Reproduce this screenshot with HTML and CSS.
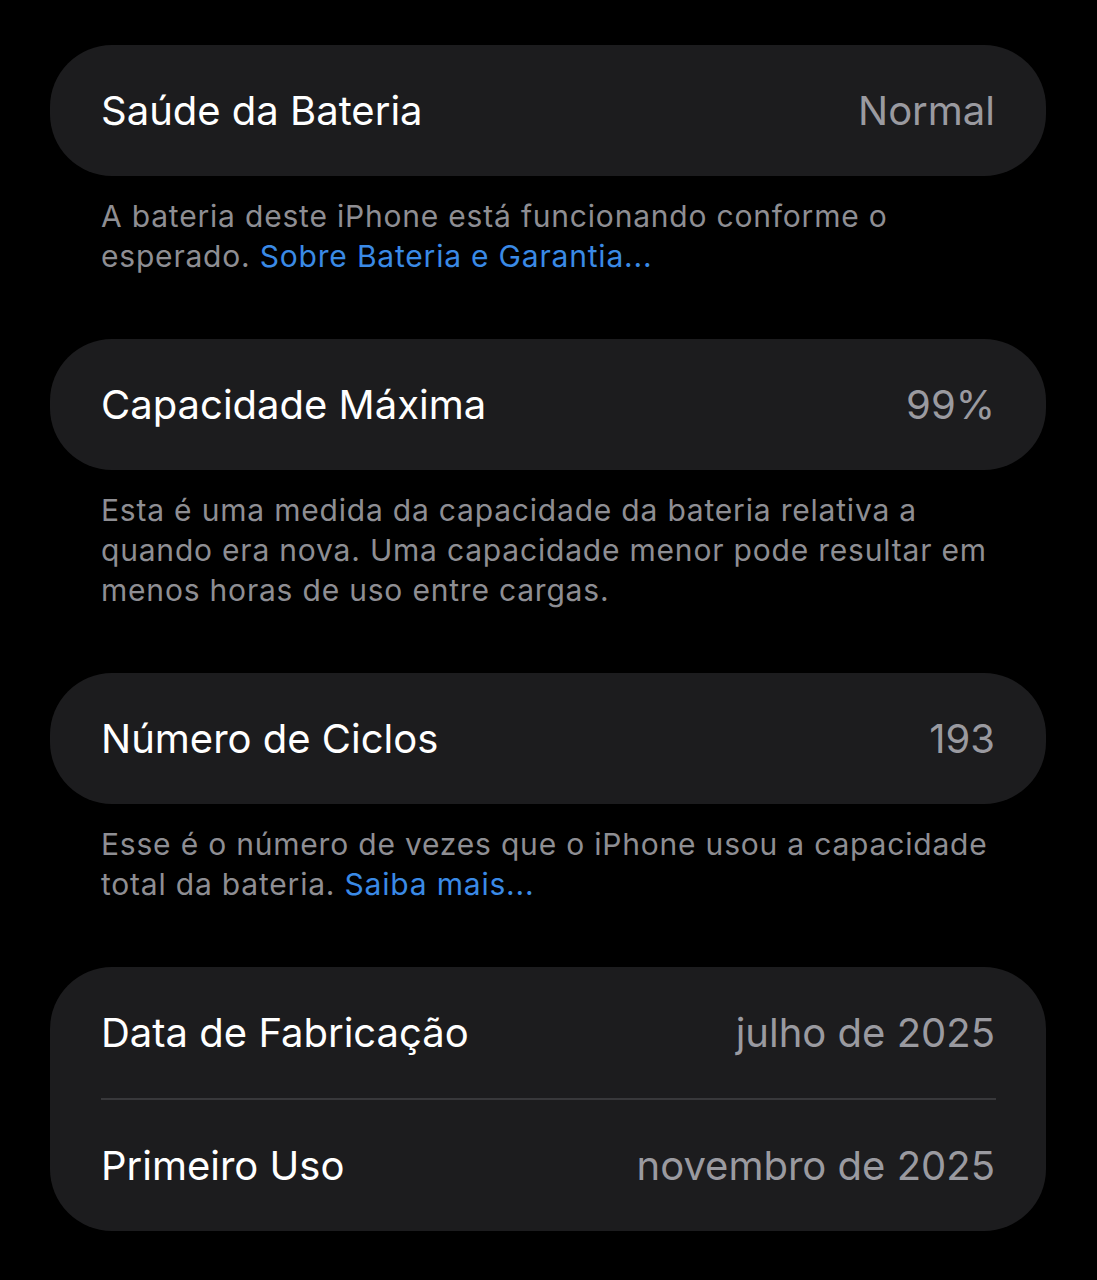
FILE: index.html
```html
<!DOCTYPE html>
<html lang="pt-BR">
<head>
<meta charset="utf-8">
<link rel="stylesheet" href="styles.css">
</head>
<body>
<main class="page">
  <section class="group">
    <div class="card">
      <div class="row"><span class="label">Saúde da Bateria</span><span class="value">Normal</span></div>
    </div>
    <p class="footer">A bateria deste iPhone está funcionando conforme o esperado. <span class="link">Sobre Bateria e Garantia...</span></p>
  </section>
  <section class="group">
    <div class="card">
      <div class="row"><span class="label">Capacidade Máxima</span><span class="value">99%</span></div>
    </div>
    <p class="footer">Esta é uma medida da capacidade da bateria relativa a quando era nova. Uma capacidade menor pode resultar em menos horas de uso entre cargas.</p>
  </section>
  <section class="group">
    <div class="card">
      <div class="row"><span class="label">Número de Ciclos</span><span class="value">193</span></div>
    </div>
    <p class="footer">Esse é o número de vezes que o iPhone usou a capacidade total da bateria. <span class="link">Saiba mais...</span></p>
  </section>
  <section class="group">
    <div class="card">
      <div class="row"><span class="label">Data de Fabricação</span><span class="value">julho de 2025</span></div>
      <div class="sep"></div>
      <div class="row"><span class="label">Primeiro Uso</span><span class="value">novembro de 2025</span></div>
    </div>
  </section>
</main>
</body>
</html>
```
FILE: styles.css
```css
html, body {
  margin: 0;
  padding: 0;
  background: #000;
}
body {
  font-family: Inter, "Noto Sans", sans-serif;
  -webkit-font-smoothing: antialiased;
}
.page {
  padding: 45px 51px 0 50px;
  display: flex;
  flex-direction: column;
  gap: 63px;
}
.group {
  display: flex;
  flex-direction: column;
}
.card {
  background: #1c1c1e;
  border-radius: 62px;
  display: flex;
  flex-direction: column;
}
.row {
  height: 131px;
  display: flex;
  align-items: center;
  justify-content: space-between;
  padding: 0 51px;
}
.label {
  color: #ffffff;
  font-size: 40px;
}
.value {
  color: #9a9aa0;
  font-size: 40px;
}
.sep {
  height: 2px;
  background: #38383b;
  margin: 0 50px 0 51px;
}
.footer {
  margin: 20px 0 0 0;
  padding: 0 51px;
  color: #8e8e93;
  font-size: 30px;
  line-height: 40px;
  letter-spacing: 0.8px;
}
.link {
  color: #3a8ae6;
}
```
